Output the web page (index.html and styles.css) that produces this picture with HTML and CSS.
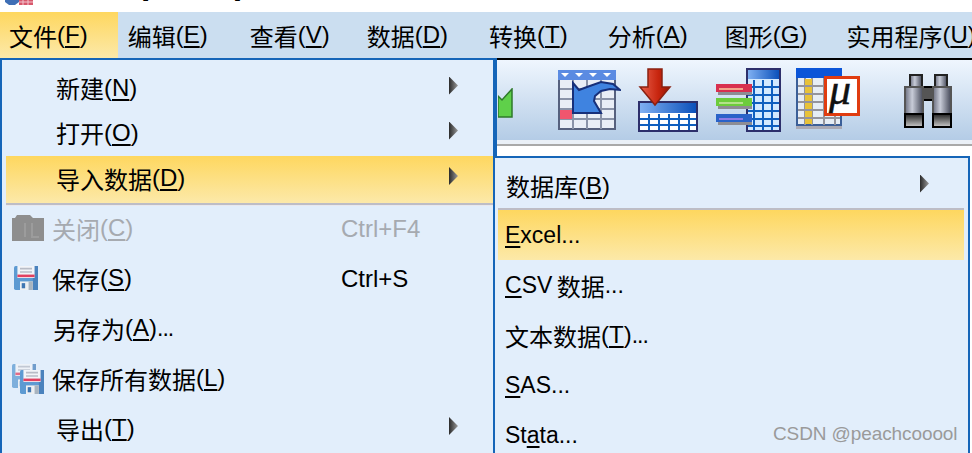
FILE: index.html
```html
<!DOCTYPE html>
<html lang="zh">
<head>
<meta charset="utf-8">
<title>数据编辑器</title>
<link rel="stylesheet" href="styles.css">
</head>
<body>
<div class="page">
  <header class="titlebar">
    <svg class="app-icon" width="28" height="6" viewBox="0 0 28 6"><path d="M0 0h14v2l-4 3H4L0 2z" fill="#3f6fb5"/><rect x="14" width="14" height="5" fill="#d8586c"/><path d="M18 0v5M23 0v5M14 2h14" stroke="#f2c4cc"/></svg>
    <div class="title-text"><span class="t1">未标题1 [数据集1]</span><span class="t2">数据编辑器</span></div>
  </header>
  <nav class="menubar">
    <div class="top active">文件<span class="m">(<u>F</u>)</span></div>
    <div class="top">编辑<span class="m">(<u>E</u>)</span></div>
    <div class="top">查看<span class="m">(<u>V</u>)</span></div>
    <div class="top">数据<span class="m">(<u>D</u>)</span></div>
    <div class="top">转换<span class="m">(<u>T</u>)</span></div>
    <div class="top">分析<span class="m">(<u>A</u>)</span></div>
    <div class="top">图形<span class="m">(<u>G</u>)</span></div>
    <div class="top">实用程序<span class="m">(<u>U</u>)</span></div>
  </nav>
  <div class="toolbar">
    <svg class="tb tb-green" width="15" height="30" viewBox="0 0 15 30"><path d="M0 8l4 4 10-11v28H0z" fill="#5fd04a" stroke="#2e7a2a" stroke-width="1.5"/></svg>
    <svg class="tb tb-1" width="63" height="62" viewBox="0 0 63 62">
      <rect x="1" y="1" width="56" height="58" fill="#e9eef6" stroke="#56617e" stroke-width="2"/>
      <rect x="0" y="0" width="58" height="10" fill="#5b8be2"/>
      <path d="M3 3h8l-4 4zM17 3h8l-4 4zM31 3h8l-4 4zM45 3h8l-4 4z" fill="#fff"/>
      <path d="M15 10v49M29 10v49M43 10v49M2 19h54M2 29h54M2 39h54M2 49h54" stroke="#8a93a8" stroke-width="2"/>
      <rect x="2" y="40" width="12" height="9" fill="#f0566e"/>
      <path d="M15 13l6 7 8-3 14-5 12 2 7 6-10-1-9 2-6 5-1 5 7 12H15z" fill="#3f83e0" stroke="#17307a" stroke-width="2"/>
    </svg>
    <svg class="tb tb-2" width="61" height="64" viewBox="0 0 61 64">
      <defs>
        <linearGradient id="hd" x1="0" x2="1" y1="0" y2="0"><stop offset="0" stop-color="#7fb0f2"/><stop offset="1" stop-color="#0b50ba"/></linearGradient>
        <linearGradient id="rd" x1="0" x2="1" y1="0" y2="0"><stop offset="0" stop-color="#e8604c"/><stop offset=".6" stop-color="#c8260f"/><stop offset="1" stop-color="#961400"/></linearGradient>
      </defs>
      <rect x="1" y="34" width="58" height="29" fill="#fff" stroke="#2d2f6b" stroke-width="2"/>
      <rect x="2" y="35" width="56" height="10" fill="url(#hd)"/>
      <path d="M11 46v16M21 46v16M31 46v16M41 46v16M51 46v16M2 51h56M2 57h56" stroke="#0f5fbf" stroke-width="2"/>
      <path d="M10 1h14v18h8L17 37 2 19h8z" fill="url(#rd)" stroke="#8a2010" stroke-width="1.5"/>
    </svg>
    <svg class="tb tb-3" width="65" height="64" viewBox="0 0 65 64">
      <rect x="31" y="1" width="33" height="62" fill="#d2e9ff" stroke="#2d2f6b" stroke-width="2"/>
      <rect x="32" y="2" width="31" height="9" fill="url(#hd)"/>
      <path d="M38 12v50M47 12v50M56 12v50M32 19h31M32 27h31M32 35h31M32 43h31M32 51h31M32 58h31" stroke="#0f5fbf" stroke-width="2"/>
      <rect x="0" y="16" width="36" height="8" fill="#d8304f"/><rect x="2" y="24" width="34" height="3" fill="#8d8d94"/><rect x="3" y="20" width="24" height="2" fill="#f3a48a"/>
      <rect x="0" y="30" width="36" height="8" fill="#6dcc3c"/><rect x="2" y="38" width="34" height="3" fill="#8d8d94"/><rect x="3" y="34" width="24" height="2" fill="#b4e28a"/>
      <rect x="0" y="46" width="36" height="8" fill="#2a62c8"/><rect x="2" y="54" width="34" height="3" fill="#8d8d94"/><rect x="3" y="50" width="24" height="2" fill="#8d7be6"/>
    </svg>
    <svg class="tb tb-4" width="65" height="64" viewBox="0 0 65 64">
      <rect x="0" y="58" width="46" height="3" fill="#a9a9b4"/>
      <rect x="1" y="1" width="44" height="56" fill="#e6edf5" stroke="#3b5f98" stroke-width="2"/>
      <path d="M9 10v47M16 10v47M28 10v47M39 10v47M2 18h42M2 26h42M2 34h42M2 42h42M2 50h42" stroke="#94949c" stroke-width="2"/>
      <rect x="0" y="0" width="46" height="10" fill="#0b55d8"/>
      <rect x="9" y="11" width="7" height="6" fill="#e8c238"/><rect x="9" y="19" width="7" height="6" fill="#e8c238"/><rect x="9" y="27" width="7" height="6" fill="#e8c238"/><rect x="9" y="35" width="7" height="6" fill="#e8c238"/><rect x="9" y="43" width="7" height="6" fill="#e8c238"/><rect x="9" y="51" width="7" height="5" fill="#e8c238"/>
      <rect x="29.5" y="9.5" width="33" height="37" fill="#fff" stroke="#e03c10" stroke-width="3"/>
      <text class="mu" x="33" y="36">μ</text>
    </svg>
    <svg class="tb tb-5" width="49" height="54" viewBox="0 0 49 54">
      <defs><linearGradient id="gl" x1="0" x2="1" y1="0" y2="0"><stop offset="0" stop-color="#6b6f80"/><stop offset=".4" stop-color="#c8ccd8"/><stop offset="1" stop-color="#444858"/></linearGradient>
      <linearGradient id="gb" x1="0" x2="0" y1="0" y2="1"><stop offset="0" stop-color="#222"/><stop offset="1" stop-color="#ccc"/></linearGradient></defs>
      <rect x="19" y="13" width="11" height="13" fill="#555" stroke="#000" stroke-width="2"/>
      <rect x="6" y="1" width="12" height="12" fill="url(#gl)" stroke="#222" stroke-width="2"/>
      <rect x="1" y="13" width="18" height="27" fill="url(#gl)" stroke="#555" stroke-width="2"/>
      <rect x="1" y="40" width="18" height="13" fill="url(#gb)" stroke="#000" stroke-width="2"/>
      <rect x="31" y="1" width="12" height="12" fill="url(#gl)" stroke="#222" stroke-width="2"/>
      <rect x="29" y="13" width="18" height="27" fill="url(#gl)" stroke="#555" stroke-width="2"/>
      <rect x="29" y="40" width="18" height="13" fill="url(#gb)" stroke="#000" stroke-width="2"/>
    </svg>
  </div>
  <div class="rule"></div>
  <main class="workspace"></main>

  <section class="menu main-menu">
    <div class="group">
      <div class="row ind-a">新建<span class="m">(<u>N</u>)</span><i class="arrow"></i></div>
      <div class="row ind-a">打开<span class="m">(<u>O</u>)</span><i class="arrow"></i></div>
      <div class="row ind-a hot tall">导入数据<span class="m">(<u>D</u>)</span><i class="arrow"></i></div>
    </div>
    <div class="sep"></div>
    <div class="group wide">
      <div class="row off">
        <svg class="ico" width="32" height="26" viewBox="0 0 32 26"><path d="M0 26V3h3l2-3h13l3 3h11v23z" fill="#8e8e8e"/><path d="M13 8v14M20 8v14h7" stroke="#9c9c9c" stroke-width="2" fill="none"/></svg>
        关闭<span class="m">(<u>C</u>)</span><span class="key">Ctrl+F4</span>
      </div>
      <div class="row">
        <svg class="ico" width="32" height="28" viewBox="0 0 32 28"><use href="#floppy" x="2"/></svg>
        保存<span class="m">(<u>S</u>)</span><span class="key">Ctrl+S</span>
      </div>
      <div class="row ind-b">另存为<span class="m">(<u>A</u>)</span><span class="lat dots">...</span></div>
      <div class="row">
        <svg class="ico" width="32" height="32" viewBox="0 0 32 32"><use href="#floppy" x="0" y="0" opacity=".75"/><use href="#floppy" x="8" y="6"/></svg>
        保存所有数据<span class="m">(<u>L</u>)</span>
      </div>
      <div class="row ind-a">导出<span class="m">(<u>T</u>)</span><i class="arrow"></i></div>
    </div>
  </section>

  <section class="menu sub-menu">
    <div class="row-s plain">数据库<span class="m">(<u>B</u>)</span><i class="arrow"></i></div>
    <div class="sep sep-s"></div>
    <div class="row-s hot">
      <span class="lat"><u>E</u>xcel...</span>
    </div>
    <div class="row-s"><span class="lat spaced"><u>C</u>SV </span>数据<span class="lat">...</span></div>
    <div class="row-s">文本数据<span class="m">(<u>T</u>)</span><span class="lat dots">...</span></div>
    <div class="row-s"><span class="lat"><u>S</u>AS...</span></div>
    <div class="row-s"><span class="lat">St<u>a</u>ta...</span></div>
  </section>

  <div class="watermark">CSDN @peachcooool</div>

  <svg class="defs" width="0" height="0">
    <defs>
      <symbol id="floppy" width="24" height="28" viewBox="0 0 28 28" overflow="visible">
        <rect width="28" height="28" rx="2" fill="#5d9ad2"/>
        <rect x="22" width="6" height="28" fill="#4a82bd"/>
        <rect x="4" y="0" width="20" height="14" fill="#f2f4f8"/>
        <path d="M7 3h14M7 7h14" stroke="#b8bcc6" stroke-width="2"/>
        <rect x="4" y="10" width="20" height="3" fill="#e2405f"/>
        <rect x="7" y="18" width="15" height="10" fill="#eef0f2"/>
        <rect x="9" y="20" width="4" height="6" fill="#3f76b2"/>
        <rect x="17" y="18" width="5" height="10" fill="#a8b4c0"/>
      </symbol>
    </defs>
  </svg>
</div>
</body>
</html>
```

FILE: styles.css
```css
* { box-sizing: border-box; }
html, body { margin: 0; padding: 0; background: #fff; }
body { font-family: "Noto Sans CJK SC", "Liberation Sans", sans-serif; font-size: 24px; color: #000; }
.page { position: relative; width: 972px; height: 453px; overflow: hidden; display: flex; flex-direction: column; }

.titlebar { flex: 0 0 12px; display: flex; overflow: hidden; background: #fff; }
.app-icon { margin-left: 5px; flex: none; }
.title-text { display: flex; margin-top: -31px; line-height: 36px; font-size: 24px; height: 36px; }
.t1 { margin-left: 17px; width: 440px; white-space: nowrap; }
.t2 { white-space: nowrap; }

.menubar { flex: 0 0 46px; display: flex; align-items: stretch; background: #cbdef0; white-space: nowrap; }
.top { display: flex; align-items: center; margin-left: 40px; }
.top:nth-child(3) { margin-left: 42px; }
.top:nth-child(4) { margin-left: 37px; }
.top:nth-child(5) { margin-left: 41px; }
.top:nth-child(7) { margin-left: 37px; }
.top:nth-child(8) { margin-left: 39px; }
.top.active { margin-left: 0; padding: 0 30px 0 9px; margin-right: -30px; width: 118px; background: linear-gradient(#fed75f, #fce9a9); }

.m { font-family: "Liberation Sans", sans-serif; font-size: 24px; }
.lat { font-family: "Liberation Sans", sans-serif; font-size: 23px; white-space: pre; }
.spaced { word-spacing: -2px; }
.dots { letter-spacing: -1px; }
u { text-decoration-thickness: 2px; text-underline-offset: 3px; }

.toolbar { flex: 0 0 82px; display: flex; align-items: flex-start; padding-left: 498px; border-top: 2px solid #000; background: linear-gradient(#eff6fe, #b4cce6); }
.tb { flex: none; }
.tb-green { margin-top: 28px; }
.tb-1 { margin-left: 45px; margin-top: 10px; }
.tb-2 { margin-left: 17px; margin-top: 8px; }
.tb-3 { margin-left: 17px; margin-top: 8px; }
.tb-4 { margin-left: 15px; margin-top: 8px; }
.tb-5 { margin-left: 43px; margin-top: 14px; }
.mu { font-family: "Liberation Serif", serif; font-style: italic; font-size: 44px; fill: #111; stroke: #111; stroke-width: .4px; }

.rule { flex: 0 0 6px; background: #eaf0f7; border-bottom: 2px solid #a9a9a9; }
.workspace { flex: 1; background: #fff repeating-linear-gradient(to bottom, transparent 0, transparent 45px, #c3d4e6 45px, #c3d4e6 46px); background-size: 100% 44px; background-position: 0 2px; }

.menu { position: absolute; background: #e2eefb; border: 2px solid #1565b8; }
.main-menu { left: 0; top: 58px; width: 497px; height: 420px; padding: 5px 0 0 4px; border-right-width: 4px; }
.sub-menu { left: 493px; top: 156px; width: 477px; height: 320px; padding: 5px 4px 0 3px; }

.row { display: flex; align-items: center; height: 50px; white-space: nowrap; }
.group .row { height: 45px; }
.group .row.tall { height: 47px; margin-top: 1px; padding-bottom: 3px; }
.group.wide { margin-top: -3px; }
.group.wide .row { height: 50px; }
.main-menu .row { padding-left: 46px; }
.main-menu .row:has(.ico) { padding-left: 6px; }
.main-menu .ind-b { padding-left: 47px; }
.main-menu .ind-a { padding-left: 50px; }
.ico { flex: none; margin-right: 8px; }
.off { color: #a6aab0; }
.key { margin-left: auto; width: 152px; padding-top: 2px; font-family: "Liberation Sans", sans-serif; font-size: 24px; }

.hot { background: linear-gradient(#fed75f, #fce9a9); }

.arrow { margin-left: auto; margin-right: 35px; margin-bottom: 4px; width: 9px; height: 18px; clip-path: polygon(0 0, 100% 50%, 0 100%); background: linear-gradient(to right, #2a2a2a, #9a9a9a); }
.sep { height: 3px; background: #bdbdc6; border-bottom: 1px solid #e8e8ee; position: relative; }
.row-s { display: flex; align-items: center; height: 50px; padding-left: 7px; white-space: nowrap; }
.row-s.plain { height: 45px; padding-left: 8px; }
.row-s .arrow { margin-right: 35px; }
.sep-s { height: 2px; border-bottom: 0; }

.watermark { position: absolute; left: 773px; top: 423px; font-family: "Liberation Sans", sans-serif; font-size: 19px; line-height: 22px; color: #9a9a9a; white-space: nowrap; letter-spacing: -.1px; }
.defs { position: absolute; }
```
